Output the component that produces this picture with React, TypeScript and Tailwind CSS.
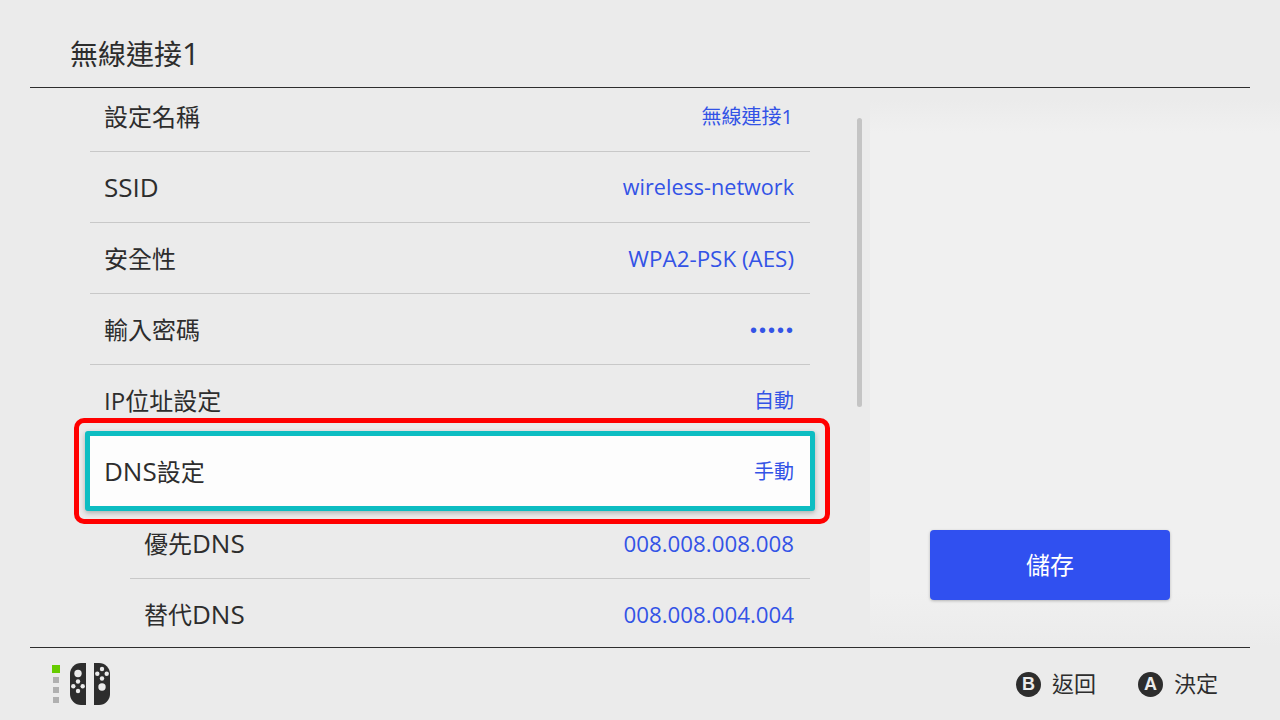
import type { ReactNode } from 'react'

const font = "font-['Open_Sans','Noto_Sans_CJK_TC',sans-serif]"

// Latin runs sit a little larger than the CJK text next to them
function Latin({ children }: { children: ReactNode }) {
  return <span className="text-[26px]">{children}</span>
}

type Row = { label: ReactNode; value: string; labelClass?: string; valueClass?: string }

const rows: Row[] = [
  { label: '設定名稱', labelClass: 'mt-[1px]', value: '無線連接1', valueClass: 'text-[20px] mr-[1px] mt-[2px]' },
  { label: <Latin>SSID</Latin>, value: 'wireless-network', valueClass: 'text-[21.6px] mt-[1px]' },
  { label: '安全性', labelClass: 'mt-[1px]', value: 'WPA2-PSK (AES)', valueClass: 'text-[22.4px] mt-[1px]' },
  { label: '輸入密碼', labelClass: 'mt-[1px]', value: '•••••', valueClass: "text-[20px] tracking-[2px] -mr-[1px] mt-[1px] font-['Liberation_Sans',sans-serif]" },
  { label: 'IP位址設定', labelClass: 'mt-[1px]', value: '自動', valueClass: 'text-[20px] mt-[2px]' },
]

const subRows: Row[] = [
  { label: <>優先<Latin>DNS</Latin></>, value: '008.008.008.008', valueClass: 'text-[22.3px] mt-[1px]' },
  { label: <>替代<Latin>DNS</Latin></>, value: '008.008.004.004', valueClass: 'text-[22.3px] mt-[1px]' },
]

function SettingRow({ label, value, labelClass = '', valueClass = '' }: Row) {
  return (
    <div className="h-[71px] flex items-center justify-between pl-[15px] pr-[16px] border-b border-[#c8c8c8]">
      <span className={`${labelClass} -ml-[1px] text-[24px] text-[#2d2d2d]`}>{label}</span>
      <span className={`${valueClass} text-[#3353e6]`}>{value}</span>
    </div>
  )
}

function JoyCon() {
  return (
    <svg width="42" height="42" viewBox="0 0 42 42">
      <path d="M16 0 V42 H11 A11 11 0 0 1 0 31 V11 A11 11 0 0 1 11 0 Z" fill="#2d2d2d" />
      <circle cx="8" cy="10.5" r="3.7" fill="#ebebeb" />
      <circle cx="8" cy="18.5" r="2.2" fill="#ebebeb" />
      <circle cx="8" cy="28" r="2.2" fill="#ebebeb" />
      <circle cx="3.3" cy="23.2" r="2.2" fill="#ebebeb" />
      <circle cx="12.7" cy="23.2" r="2.2" fill="#ebebeb" />
      <path d="M24 0 V42 H29 A11 11 0 0 0 40 31 V11 A11 11 0 0 0 29 0 Z" fill="#2d2d2d" />
      <circle cx="32" cy="24" r="3.7" fill="#ebebeb" />
      <circle cx="32" cy="6" r="2.2" fill="#ebebeb" />
      <circle cx="32" cy="15.5" r="2.2" fill="#ebebeb" />
      <circle cx="27.3" cy="10.8" r="2.2" fill="#ebebeb" />
      <circle cx="36.7" cy="10.8" r="2.2" fill="#ebebeb" />
    </svg>
  )
}

function Hint({ letter, label }: { letter: string; label: string }) {
  return (
    <div className="flex items-center gap-[11px]">
      <span className="w-[25px] h-[25px] rounded-full bg-[#2d2d2d] text-[#ebebeb] text-[18px] font-bold flex items-center justify-center font-['Liberation_Sans',sans-serif]">
        {letter}
      </span>
      <span className="text-[22px] text-[#2d2d2d] pb-[2px]">{label}</span>
    </div>
  )
}

export default function App() {
  return (
    <div className={`w-[1280px] h-[720px] bg-[#ebebeb] flex flex-col overflow-hidden ${font}`}>
      {/* Header */}
      <header className="h-[88px] shrink-0 mx-[30px] border-b border-[#2d2d2d] flex items-center pl-[40px] pt-[19px]">
        <h1 className="text-[28px] font-normal text-[#2d2d2d]">
          無線連接<span className="text-[31px]">1</span>
        </h1>
      </header>

      <main className="flex-1 flex min-h-0">
        {/* Settings list */}
        <div className="relative w-[870px] shrink-0 overflow-hidden">
          <div className="w-[720px] ml-[90px] -mt-[7px]">
            {rows.map(row => (
              <SettingRow key={row.value} {...row} />
            ))}
            <div className="relative z-10 -mx-[5px] -mt-[5px] h-[80px] flex items-center justify-between pl-[14px] pr-[16px] bg-[#fdfdfd] border-[5px] border-[#0dbdc2] rounded-[3px] shadow-[0_2px_5px_rgba(0,0,0,0.25)]">
              <span className="text-[24px] text-[#2d2d2d]"><Latin>DNS</Latin>設定</span>
              <span className="text-[20px] text-[#3353e6] mt-[2px]">手動</span>
            </div>
            <div className="ml-[40px] -mt-[3px]">
              {subRows.map(row => (
                <SettingRow key={row.value} {...row} />
              ))}
            </div>
          </div>

          {/* Scrollbar */}
          <div className="absolute left-[857px] top-[30px] w-[5px] h-[289px] rounded-full bg-[#c4c4c4]" />
          {/* Red annotation */}
          <div className="absolute z-20 left-[74px] top-[330px] w-[756px] h-[106px] border-[5px] border-[#ff0000] rounded-[10px]" />
        </div>

        {/* Side panel */}
        <aside className="flex-1 bg-[linear-gradient(to_bottom,#ebebeb,#ebebeb_2%,#f0f0f0_8%,#f0f0f0_90%,#ebebeb)] flex flex-col justify-end items-start pl-[60px] pb-[47px]">
          <button className="w-[240px] h-[70px] rounded-[4px] bg-[#3050f0] text-white text-[24px] shadow-[0_1px_3px_rgba(0,0,0,0.25)]">
            儲存
          </button>
        </aside>
      </main>

      {/* Footer */}
      <footer className="h-[73px] shrink-0 mx-[30px] border-t border-[#2d2d2d] flex items-center justify-between pl-[22px] pr-[32px]">
        <div className="flex items-center gap-[10px]">
          <div className="flex flex-col items-center gap-[4px]">
            <span className="w-[8px] h-[8px] bg-[#66cc00]" />
            <span className="w-[6px] h-[6px] bg-[#b0b0b0]" />
            <span className="w-[6px] h-[6px] bg-[#b0b0b0]" />
            <span className="w-[6px] h-[6px] bg-[#b0b0b0]" />
          </div>
          <JoyCon />
        </div>
        <div className="flex items-center gap-[42px]">
          <Hint letter="B" label="返回" />
          <Hint letter="A" label="決定" />
        </div>
      </footer>
    </div>
  )
}
